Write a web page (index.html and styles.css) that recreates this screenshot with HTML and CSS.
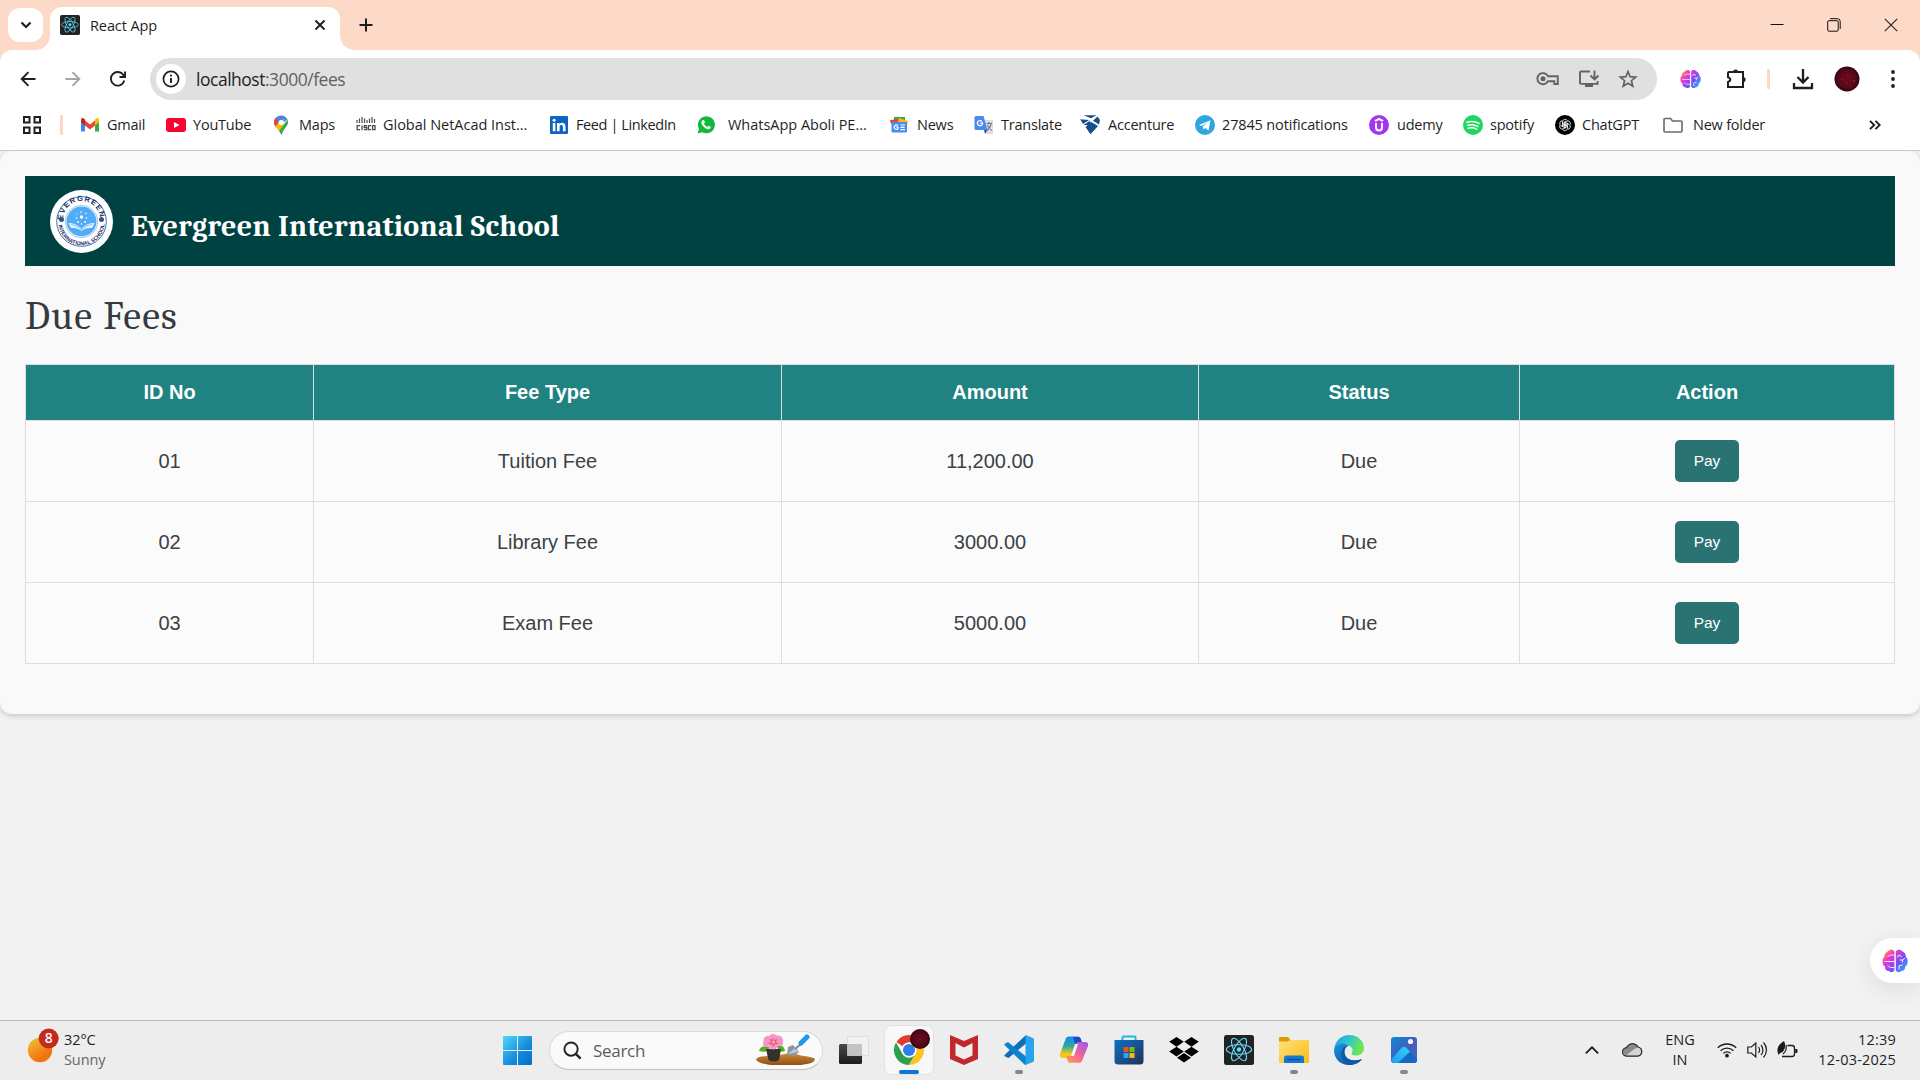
FILE: index.html
```html
<!DOCTYPE html>
<html lang="en">
<head>
<meta charset="utf-8">
<title>React App</title>
<link rel="stylesheet" href="styles.css">
</head>
<body>
<svg class="defs" width="0" height="0" aria-hidden="true">
  <defs>
    <linearGradient id="gBrain" x1="0" y1="0" x2="26" y2="24" gradientUnits="userSpaceOnUse"><stop offset="0.12" stop-color="#ff9a1f"/><stop offset="0.3" stop-color="#f136d2"/><stop offset="0.6" stop-color="#7a4df2"/><stop offset="0.92" stop-color="#22b5fb"/></linearGradient>
    <linearGradient id="gSun" x1="0.1" y1="0" x2="0.7" y2="1"><stop offset="0" stop-color="#edc536"/><stop offset="0.8" stop-color="#f17310"/></linearGradient>
    <linearGradient id="gWin" x1="0" y1="0" x2="1" y2="1"><stop offset="0" stop-color="#52d6fc"/><stop offset="0.6" stop-color="#1389db"/><stop offset="1" stop-color="#0070cb"/></linearGradient>
    <radialGradient id="gAvatar"><stop offset="0" stop-color="#6a0a1e"/><stop offset="0.7" stop-color="#560818"/><stop offset="1" stop-color="#30040f"/></radialGradient>
    <linearGradient id="gCopA" x1="0" y1="0" x2="0" y2="1"><stop offset="0" stop-color="#168bea"/><stop offset="0.45" stop-color="#2aa9a1"/><stop offset="0.8" stop-color="#f4c81d"/></linearGradient>
    <linearGradient id="gCopB" x1="1" y1="0" x2="0" y2="1"><stop offset="0" stop-color="#9b54ef"/><stop offset="0.5" stop-color="#f0649d"/><stop offset="1" stop-color="#ffa241"/></linearGradient>
    <linearGradient id="gStore" x1="0" y1="0" x2="1" y2="1"><stop offset="0" stop-color="#0b72c4"/><stop offset="1" stop-color="#25305a"/></linearGradient>
    <linearGradient id="gFold" x1="0" y1="0" x2="1" y2="1"><stop offset="0" stop-color="#ffe07a"/><stop offset="1" stop-color="#fdbb15"/></linearGradient>
    <linearGradient id="gEdgeA" x1="0" y1="0" x2="1" y2="0.3"><stop offset="0" stop-color="#1e9fe3"/><stop offset="0.5" stop-color="#2cc4d0"/><stop offset="1" stop-color="#6ee650"/></linearGradient>
    <linearGradient id="gEdgeB" x1="0" y1="0" x2="0.8" y2="1"><stop offset="0" stop-color="#1996e4"/><stop offset="1" stop-color="#0b4c9c"/></linearGradient>
    <linearGradient id="gPhoto" x1="0" y1="0" x2="1" y2="1"><stop offset="0" stop-color="#0f86dd"/><stop offset="0.6" stop-color="#4a5bb5"/><stop offset="1" stop-color="#2f72c8"/></linearGradient>
    <linearGradient id="gPeak" x1="1" y1="0" x2="0" y2="1"><stop offset="0" stop-color="#39d0fb"/><stop offset="1" stop-color="#1b9df0"/></linearGradient>
    <linearGradient id="gSoil" x1="0" y1="0" x2="0" y2="1"><stop offset="0" stop-color="#cf8a3b"/><stop offset="1" stop-color="#8f5215"/></linearGradient>
    <linearGradient id="gTv" x1="0" y1="0" x2="0" y2="1"><stop offset="0" stop-color="#4a4a48"/><stop offset="1" stop-color="#1b1b1b"/></linearGradient>
    <symbol id="react" viewBox="0 0 30 30"><rect width="30" height="30" rx="2.5" fill="#222"/><g fill="none" stroke="#61dafb" stroke-width="1.1"><ellipse cx="15" cy="14.5" rx="12.6" ry="4.8"/><ellipse cx="15" cy="14.5" rx="12.6" ry="4.8" transform="rotate(60 15 14.5)"/><ellipse cx="15" cy="14.5" rx="12.6" ry="4.8" transform="rotate(120 15 14.5)"/></g><circle cx="15" cy="14.5" r="2.2" fill="#61dafb"/></symbol>
    <symbol id="brain" viewBox="0 0 26 24"><path fill="url(#gBrain)" d="M12.4 2.5v19c-1 1.9-4 2.400-5.600.6C4.300 22 2.700 20 3 17.500 1.400 16.500.300 14.500.600 12.400.200 10.500 1 8.800 2.300 7.900 2.200 5.500 3.700 3.300 5.700 2.600 7.400.100 11 .100 12.400 2.500z"/><path fill="url(#gBrain)" d="M13.800 2.500v19c1 1.900 4 2.400 5.600.6 2.500-.1 4.100-2.100 3.800-4.600 1.600-1 2.700-3 2.400-5.100.4-1.900-.4-3.600-1.700-4.500.1-2.400-1.400-4.600-3.400-5.300-1.700-2.500-5.300-2.500-6.700-.1z"/><g fill="none" stroke="#fff" stroke-width=".9" stroke-linecap="round"><path d="M12 6H9.500C7.500 6 7 7 6 7.500M3 12.500h9M12 18.500H9.500c-2 0-2.500-1-3.500-1.500M15.500 8l1.500-2 2.500 1.500M18 11h2.500l2-1.500M20.500 11v2M17 20v-3l3-1"/></g></symbol>
  </defs>
</svg>

<header class="browser">
  <div class="tabstrip">
    <button class="tab-search"><svg width="12" height="8" viewBox="0 0 12 8"><path d="M1.500 1.500 6 6l4.500-4.500" fill="none" stroke="#1f1f1f" stroke-width="2.200"/></svg></button>
    <div class="tab">
      <svg width="20" height="20"><use href="#react"/></svg>
      <span class="tab-title">React App</span>
      <svg width="12" height="12" viewBox="0 0 12 12"><path d="m1.500 1.500 9 9m0-9-9 9" stroke="#1f1f1f" stroke-width="1.900"/></svg>
    </div>
    <svg class="new-tab" width="14" height="14" viewBox="0 0 14 14"><path d="M7 .5v13M.5 7h13" stroke="#1f1f1f" stroke-width="2"/></svg>
    <div class="window-controls">
      <svg width="14" height="14" viewBox="0 0 14 14"><path d="M.5 6.500h13" stroke="#111" stroke-width="1"/></svg>
      <svg width="14" height="14" viewBox="0 0 14 14" fill="none" stroke="#111"><rect x=".7" y="2.700" width="10.500" height="10.500" rx="1.200"/><path d="M3 .7h7.500q2.700 0 2.700 2.700V11"/></svg>
      <svg width="14" height="14" viewBox="0 0 14 14"><path d="m.8.8 12.400 12.400m0-12.400L.8 13.200" stroke="#222" stroke-width="1.100"/></svg>
    </div>
  </div>

  <div class="toolbar">
    <div class="nav">
      <svg width="16" height="16" viewBox="0 0 16 16" fill="none" stroke="#1f1f1f" stroke-width="1.900"><path d="M15.500 8H2M8.500 1.200 1.700 8l6.800 6.800"/></svg>
      <svg width="16" height="16" viewBox="0 0 16 16" fill="none" stroke="#a5a5a5" stroke-width="1.900"><path d="M.5 8H14M7.500 1.200 14.300 8l-6.800 6.800"/></svg>
      <svg width="16" height="16" viewBox="0 0 16 16" fill="none" stroke="#1f1f1f" stroke-width="1.900"><path d="M14.300 9.500A6.800 6.800 0 1 1 13.500 4.200l1.200 1.500M15 .5V6H9.500"/></svg>
    </div>
    <div class="omnibox">
      <span class="site-info"><svg width="18" height="18" viewBox="0 0 18 18"><circle cx="9" cy="9" r="7.600" fill="none" stroke="#1f1f1f" stroke-width="1.700"/><path d="M9 8v5M9 4.700v1.900" stroke="#1f1f1f" stroke-width="1.900"/></svg></span>
      <span class="url">localhost<span class="url-rest">:3000/fees</span></span>
      <div class="omni-actions">
        <svg width="24" height="20" viewBox="0 0 24 20" fill="none" stroke="#5f6368" stroke-width="1.900"><path d="M12 7.200a5.600 5.600 0 1 0 0 5h6.300V15h3.500V7.200z"/><circle cx="7" cy="9.700" r="2.500" fill="#5f6368" stroke="none"/></svg>
        <svg width="22" height="20" viewBox="0 0 22 20" fill="none" stroke="#5f6368" stroke-width="1.900"><path d="M12 2.500H3.200q-1.200 0-1.200 1.200v10q0 1.200 1.200 1.200h16.400V12M16.500 1.500V9M12.500 6.500l4 4 4-4"/><path d="M7 14.500h8V18H7z" fill="#5f6368" stroke="none"/></svg>
        <svg width="20" height="20" viewBox="0 0 20 20" fill="none" stroke="#5f6368" stroke-width="1.700"><path d="m10 2.500 2.100 5.200 5.600.4-4.300 3.600 1.400 5.500L10 14.200l-4.800 3 1.400-5.500-4.300-3.600 5.600-.4z"/></svg>
      </div>
    </div>
    <div class="tools">
      <svg class="t-brain" width="21" height="20"><use href="#brain"/></svg>
      <svg class="t-ext" width="22" height="22" viewBox="0 0 22 22"><path d="M4 4h14v15H3v-5c3-.8 3-4 0-4.800V5q0-1 1-1z" fill="none" stroke="#1f1f1f" stroke-width="2"/><path d="M8 4a2.600 2.600 0 0 1 5.200 0zM18 9a2.600 2.600 0 0 1 0 5.200z" fill="#1f1f1f"/></svg>
      <i class="peach-bar"></i>
      <svg class="t-down" width="22" height="22" viewBox="0 0 22 22" fill="none" stroke="#1f1f1f" stroke-width="2.300"><path d="M11 1v13M5.500 9l5.500 5.500L16.500 9M2 15v5h18v-5"/></svg>
      <svg class="t-ava" width="26" height="26"><circle cx="13" cy="13" r="12.500" fill="url(#gAvatar)"/><g fill="#e0283f"><circle cx="8" cy="13" r=".6"/><circle cx="14" cy="9" r=".6"/><circle cx="20" cy="15" r=".8"/><circle cx="13" cy="17" r=".6"/><circle cx="17" cy="20" r=".6"/></g></svg>
      <svg class="t-menu" width="4" height="18" viewBox="0 0 4 18" fill="#1f1f1f"><circle cx="2" cy="2" r="1.900"/><circle cx="2" cy="9" r="1.900"/><circle cx="2" cy="16" r="1.900"/></svg>
    </div>
  </div>

  <nav class="bookmarks">
    <svg class="apps" width="18" height="18" viewBox="0 0 18 18" fill="none" stroke="#1f1f1f" stroke-width="2"><path d="M1 1h5.500v5.500H1zM11.500 1H17v5.500h-5.500zM1 11.500h5.500V17H1zM11.500 11.500H17V17h-5.500z"/></svg>
    <i class="peach-bar"></i>
    <a class="bm"><svg width="20" height="20" viewBox="0 0 20 20"><path d="M1 5v11.500h4V9z" fill="#4285f4"/><path d="M19 5v11.500h-4V9z" fill="#34a853"/><path d="M5 5.500 10 9.500l5-4v5l-5 4-5-4z" fill="#ea4335"/><path d="M1 5q0-2.500 2.500-1.800L5 4.500v6L1 7.200z" fill="#c5221f"/><path d="M19 5q0-2.500-2.500-1.800L15 4.500v6l4-3.300z" fill="#fbbc04"/></svg><span>Gmail</span></a>
    <a class="bm"><svg width="20" height="20"><rect y="3" width="20" height="14" rx="3" fill="#ff0033"/><path d="m8 7 5.500 3L8 13z" fill="#fff"/></svg><span>YouTube</span></a>
    <a class="bm far"><svg width="20" height="20" viewBox="0 0 20 20"><path d="M3 7.500A7 7 0 0 1 10 .5c3 0 5.500 1.700 6.500 4L5 12.500C4 11 3 9.500 3 7.500z" fill="#4285f4"/><path d="M4.700 3 8 6l-3.500 5.500C3 9 2.300 6 4.700 3z" fill="#ea4335"/><path d="M4.300 11.300 13 3.500 12 11l-4 5.500c-1-2-2.700-3.700-3.700-5.200z" fill="#fbbc04"/><path d="M16.500 4.500c1.200 3 .2 5.500-1.500 7.500-2 2.500-3.500 4.500-4 7.500h-1c-.3-1-.9-2.200-2-3.500z" fill="#34a853"/><circle cx="10" cy="7.500" r="2.500" fill="#fff"/></svg><span>Maps</span></a>
    <a class="bm loose"><svg width="20" height="20" viewBox="0 0 20 20" fill="none" stroke="#4b4b4b" stroke-width="1.200"><path d="M1 5v3M3.500 3.500v4.500M6 2v6M8.500 3.500v4.500M11 5v3M13.500 3.500v4.500M16 2v6M18.500 4v4"/><path stroke-width="1.300" d="M4 10.700H1.200v4H4M6 10.500v4.700M11 10.700H8.300v1.800h2.500v2.200H8M15 10.700h-2.500v4H15M16.500 10.700H19v4h-2.500z"/></svg><span>Global NetAcad Inst...</span></a>
    <a class="bm tight"><svg width="20" height="20"><rect x="1" y="1" width="18" height="18" rx="1" fill="#0a66c2"/><path d="M3.800 8h2.600v8.300H3.800zM8 8h2.500v1.200c1.800-2.500 6-1.700 6 2.200v4.900h-2.600v-4.500c0-2.400-3.300-2.300-3.300 0v4.500H8z" fill="#fff"/><circle cx="5.100" cy="5.200" r="1.500" fill="#fff"/></svg><span>Feed | LinkedIn</span></a>
    <a class="bm wide loose"><svg width="20" height="20" viewBox="0 0 20 20"><path d="M1.500 18.500 3 14a8.500 8.500 0 1 1 3.200 3.200z" fill="#12b83d"/><path d="M6.500 5.500c1.500-1.200 1.800.5 2.500 1.800l-1 1.500c.7 1.500 1.700 2.500 3.300 3.100l1.400-1.200c1.500.8 2.700 1 1.800 2.300-2 2.700-5.500.3-7.300-1.800-1.600-1.900-2.800-4.200-.7-5.700z" fill="#fff"/></svg><span>WhatsApp Aboli PE...</span></a>
    <a class="bm far"><svg width="20" height="20" viewBox="0 0 20 20"><path d="M5 2h11v6H5z" fill="#34a853"/><path d="m1 5 10-1v5H2z" fill="#ea4335"/><path d="m10 3 9 3-1 5-9-3z" fill="#fbbc04"/><rect x="2.500" y="7" width="15.500" height="10.500" rx="1" fill="#4c8bf5"/><path d="M9 10.500a2.200 2.200 0 1 0 0 3.200v-1.500H7.300M11.500 10h4.500M11.500 12.300h4M11.500 14.600h4.500" fill="none" stroke="#fff" stroke-width="1.200"/></svg><span>News</span></a>
    <a class="bm"><svg width="20" height="20" viewBox="0 0 20 20"><path d="M8 5h11v14h-7z" fill="#dcdcdc"/><path d="M2 1h7.500l4 14H2q-1.500 0-1.500-1.500v-11Q.5 1 2 1z" fill="#4a87f2"/><path d="M10 15h3.500L11 19z" fill="#2550b0"/><path d="M8 6.500a2.600 2.600 0 1 0 .6 1.700H6.300" fill="none" stroke="#fff" stroke-width="1.300"/><path d="M12.500 8.500H18M15 7v1.500M17 9c-.5 3-2 5-4 6.300M13.500 10c.8 2.200 2.200 4 4.300 5.300" fill="none" stroke="#687887" stroke-width="1.100"/></svg><span>Translate</span></a>
    <a class="bm far"><svg width="20" height="20" viewBox="0 0 20 20" fill="#174e8c"><path d="M3.500.3h13l-5.500 3zM.2 4.300 9 5 3 9zM17.500 1.500 20 5l-1 4.500-6-3.700zM3.500 10 10 5.800l.8 4.200zM11.300 7l6.700 4-7.500 8.300-5-7.300z"/></svg><span>Accenture</span></a>
    <a class="bm"><svg width="20" height="20"><circle cx="10" cy="10" r="10" fill="#2fa5de"/><path d="m4 10 11.500-4.800-2 10.200-3.300-2.500-1.800 1.700-.6-3.200 5-4.200-6.200 3.900z" fill="#fff"/></svg><span class="wider">27845 notifications</span></a>
    <a class="bm far"><svg width="20" height="20"><circle cx="10" cy="10" r="10" fill="#a435f0"/><path d="m6 6.200 4-2.400 4 2.400M7 8v4.500c0 4 6 4 6 0V8" fill="none" stroke="#fff" stroke-width="2"/></svg><span>udemy</span></a>
    <a class="bm"><svg width="20" height="20"><circle cx="10" cy="10" r="10" fill="#1ed760"/><path d="M4 7.200c4-1.200 8.500-.8 12 1.200M4.600 10.300c3.500-1 7.200-.6 10.200 1.100M5.200 13.200c3-.8 5.800-.5 8.400.9" fill="none" stroke="#fff" stroke-width="1.600" stroke-linecap="round"/></svg><span>spotify</span></a>
    <a class="bm"><svg width="20" height="20"><circle cx="10" cy="10" r="10" fill="#000"/><g fill="none" stroke="#fff" stroke-width=".8"><path id="kn" d="M7.500 11.400V6.800a2.600 2.600 0 0 1 4.800-1.300M8.500 10.800l4.600-2.700"/><use href="#kn" transform="rotate(60 10 10)"/><use href="#kn" transform="rotate(120 10 10)"/><use href="#kn" transform="rotate(180 10 10)"/><use href="#kn" transform="rotate(240 10 10)"/><use href="#kn" transform="rotate(300 10 10)"/></g></svg><span>ChatGPT</span></a>
    <a class="bm folder"><svg width="20" height="20" viewBox="0 0 20 20"><path d="M2 3.500h5.500L9.500 6H18q1 0 1 1v9q0 1-1 1H2q-1 0-1-1V4.500q0-1 1-1z" fill="none" stroke="#6a6a6a" stroke-width="1.600"/></svg><span>New folder</span></a>
    <svg class="more" width="12" height="10" viewBox="0 0 12 10"><path d="m1 .8 4.200 4.200L1 9.200M6.500.8 10.700 5 6.500 9.200" fill="none" stroke="#1f1f1f" stroke-width="1.900"/></svg>
  </nav>
</header>

<main class="page">
  <section class="card">
    <div class="school-bar">
      <svg class="school-logo" width="63" height="63" viewBox="0 0 63 63">
        <defs><path id="arcTop" d="M13.200 33A18.600 18.600 0 1 1 49.800 33"/><path id="arcBot" d="M8.300 32A23.200 23.200 0 0 0 54.700 32"/></defs>
        <circle cx="31.500" cy="31.500" r="31.500" fill="#fff"/>
        <circle cx="31.500" cy="31.500" r="24.800" fill="none" stroke="#4070b0" stroke-width="1"/>
        <circle cx="31.500" cy="31.500" r="16.200" fill="#fff" stroke="#5f9fdc" stroke-width=".6"/>
        <circle cx="31.500" cy="31.500" r="15" fill="#50acf8"/>
        <g class="seal-text"><text font-size="7.500"><textPath href="#arcTop" startOffset="3" textLength="56">EVERGREEN</textPath></text><text font-size="5.200"><textPath href="#arcBot" startOffset="3" textLength="67" lengthAdjust="spacingAndGlyphs">INTERNATIONAL SCHOOL</textPath></text></g>
        <path d="M18.500 33c5 0 10 2 13 6 3-4 8-6 13-6l-2.500 5c-4 0-8 .5-10.500 3-2.500-2.500-6.500-3-10.500-3z" fill="#e5f4ff"/>
        <path d="M21 34.500c4 .5 8 2 10.500 5.500 2.500-3.500 6.500-5 10.500-5.500" fill="none" stroke="#50acf8" stroke-width=".7"/>
        <g fill="#fff"><circle cx="31.500" cy="27" r="1.700"/><circle cx="26.500" cy="28" r=".8"/><circle cx="36.500" cy="28" r=".8"/><circle cx="31" cy="22" r=".8"/><circle cx="27" cy="24" r=".6"/><circle cx="36" cy="23.500" r=".8"/><circle cx="28" cy="32" r=".9"/><circle cx="35" cy="32" r=".9"/><circle cx="31.500" cy="34" r=".7"/></g>
        <circle cx="11.500" cy="29.500" r="2.500" fill="#3a4f80"/><circle cx="51.500" cy="29.500" r="2.500" fill="#3a4f80"/>
      </svg>
      <h1 class="school-name">Evergreen International School</h1>
    </div>
    <h2 class="title">Due Fees</h2>
    <table class="fees">
      <colgroup><col class="c-id"><col class="c-type"><col class="c-amount"><col class="c-status"><col class="c-action"></colgroup>
      <thead><tr><th>ID No</th><th>Fee Type</th><th>Amount</th><th>Status</th><th>Action</th></tr></thead>
      <tbody>
        <tr><td>01</td><td>Tuition Fee</td><td>11,200.00</td><td>Due</td><td><button class="pay">Pay</button></td></tr>
        <tr><td>02</td><td>Library Fee</td><td>3000.00</td><td>Due</td><td><button class="pay">Pay</button></td></tr>
        <tr><td>03</td><td>Exam Fee</td><td>5000.00</td><td>Due</td><td><button class="pay">Pay</button></td></tr>
      </tbody>
    </table>
  </section>
  <div class="float-pill"><svg width="26" height="24"><use href="#brain"/></svg></div>
</main>

<footer class="taskbar">
  <div class="weather">
    <svg width="32" height="36" viewBox="0 0 32 36"><circle cx="13" cy="22" r="12.200" fill="url(#gSun)"/><circle cx="21.700" cy="10.500" r="10" fill="#c42b1c"/><text x="21.700" y="15.300" text-anchor="middle" class="badge-text">8</text></svg>
    <div class="weather-text"><span>32°C</span><span class="dim">Sunny</span></div>
  </div>
  <svg class="start" width="29" height="29" viewBox="0 0 29 29"><path d="M1 0h13v14H0V1q0-1 1-1zM15 0h13q1 0 1 1v13H15zM0 15h14v14H1q-1 0-1-1zM15 15h14v13q0 1-1 1H15z" fill="url(#gWin)"/></svg>
  <div class="search">
    <svg width="19" height="19" viewBox="0 0 20 20" fill="none" stroke="#222" stroke-width="2"><circle cx="8.500" cy="8.500" r="7"/><path d="m13.500 13.500 5 5" stroke-width="2.600"/></svg>
    <span>Search</span>
    <svg class="garden" width="60" height="32" viewBox="0 0 60 32">
      <path d="M0 25c3-3 10-3 18-3 10-2 16-4 22-2 8 3 16 2 19 5 0 4-8 5-14 6H15C9 30 1 29 0 25z" fill="url(#gSoil)"/>
      <path d="M3 17c1-4 5-6 10-4 1 3-3 6-10 4zM21 12c5-2 8 2 8 5-4 2-7 0-8-5z" fill="#58ad2b"/>
      <path d="M10 15h15l-2 11q-5 3-10.500 0z" fill="#33302f"/>
      <g fill="#f795c8"><circle cx="12" cy="6.500" r="4.500"/><circle cx="22" cy="6.500" r="5"/><circle cx="17" cy="4" r="4"/><circle cx="17" cy="11" r="4.500"/><circle cx="24" cy="9" r="3"/><circle cx="10" cy="10" r="3"/></g><path d="m17 3 1.300 3 3-1.500L20 8l3 2-4 .2-1.500 3-1.500-3-4-.2 3-2-1.500-3.500 3 1.500z" fill="#ea5c97"/><circle cx="17.500" cy="8" r="1.500" fill="#fbbd45"/>
      <path d="m31 21 1-8 5-2 6 7-5 4z" fill="#8996a5"/><path d="m32 20 7-6 3 4z" fill="#c1cad4"/><path d="m39 15 6-5" stroke="#7c8794" stroke-width="2"/><path d="m45 9 6-6" stroke="#2398e6" stroke-width="5" stroke-linecap="round"/>
    </svg>
  </div>
  <div class="apps-row">
    <span class="app"><svg width="30" height="30" viewBox="0 0 30 30"><rect x="0" y="9" width="23" height="20" rx="1.500" fill="url(#gTv)"/><rect x="8.500" y="1.500" width="21" height="19" rx="1" fill="#f1f1f1" stroke="#dcdcdc"/><path d="M8 9h15v12H8z" fill="#b8b8b8" fill-opacity=".8"/></svg></span>
    <span class="app active"><svg width="38" height="38" viewBox="0 0 38 38"><path d="M16 7a15 15 0 0 1 13 7.500H16a7.500 7.500 0 0 0-6.500 3.700L3.500 14A15 15 0 0 1 16 7z" fill="#e33b2e"/><path d="M3 14.500a15 15 0 0 0 13 22.500l6.500-11.300A7.500 7.500 0 0 1 9.500 25.700z" fill="#2da04c"/><path d="M29 14.500A15 15 0 0 1 16 37l6.500-11.300A7.500 7.500 0 0 0 16 14.500z" fill="#fcc41f"/><circle cx="16" cy="22" r="7.500" fill="#fff"/><circle cx="16" cy="22" r="6" fill="#2f7de9"/><circle cx="27" cy="11" r="10" fill="url(#gAvatar)"/></svg><i class="run current"></i></span>
    <span class="app"><svg width="28" height="30" viewBox="0 0 28 30"><path d="m0 0 14 6 14-6v24l-14 6-14-6z" fill="#c1272d"/><path d="m5.500 8 8.500 4.500L22.500 8v12.500L14 24.500l-8.500-4z" fill="#ededed"/></svg></span>
    <span class="app"><svg width="30" height="30" viewBox="0 0 30 30"><path d="M22 0v8.500L4.500 23 1 21.500Q-.2 20.500 1 19.500L21 1z" fill="#0d6fb8"/><path d="M1 10.500Q-.2 9.500 1 8.500L4 7l18 14.500V30l-1.500-.5z" fill="#0d83cd"/><path d="M21.500 0 29 3q1 .5 1 1.500v21q0 1-1 1.500l-7.500 3z" fill="#27a4ee"/></svg><i class="run"></i></span>
    <span class="app"><svg width="30" height="28" viewBox="0 0 30 28"><path d="M7 2q.8-1.500 2.500-1.500h10Q21 .5 22 3l1 4h-3.500q-2 0-2.600 2L13 20q-.7 2-3 2H4q-4 0-3-4z" fill="url(#gCopA)"/><path d="M14 1h5.500Q21 1 22 4l1 3h-4q-2 0-2.500 2z" fill="#1e49c8"/><path d="M23 25q-.8 1.700-2.500 1.700h-10Q9 26.700 8 23l-1-3h3.500q2 0 2.600-2L17 8q.7-2 3-2h6q4 0 3 4z" fill="url(#gCopB)"/><path d="M16 8h3l-4 12h-3z" fill="#f8f3f3"/></svg></span>
    <span class="app"><svg width="30" height="30" viewBox="0 0 30 30"><path d="M8.500 5V2.500Q8.500 1.500 9.500 1.500h11q1 0 1 1V5" fill="none" stroke="#20b5ec" stroke-width="2"/><path d="M.5 5h29v21q0 3.500-3.500 3.500H4Q.5 29.500.5 26z" fill="url(#gStore)"/><path d="M9.500 12h5v5h-5z" fill="#f25022"/><path d="M15.500 12h5v5h-5z" fill="#7fba00"/><path d="M9.500 18h5v5h-5z" fill="#21a8f3"/><path d="M15.500 18h5v5h-5z" fill="#ffb900"/></svg></span>
    <span class="app"><svg width="30" height="26" viewBox="0 0 30 26"><path d="m7.500 0 7.300 4.800-7.300 4.900L.2 4.800zM22.500 0l7.300 4.800-7.300 4.900-7.300-4.900zM7.500 9.700l7.300 4.900-7.300 4.800-7.300-4.800zM22.500 9.700l7.300 4.900-7.300 4.800-7.300-4.800zM15 16l7 4.700-7 4.900-7-4.900z"/></svg></span>
    <span class="app"><svg width="30" height="30"><use href="#react"/></svg></span>
    <span class="app"><svg width="30" height="28" viewBox="0 0 30 28"><path d="M0 2Q0 1 1 1h8l3 3.500V10H0z" fill="#dc9a0a"/><path d="M0 5.500h8L12 4h18v22q0 1-1 1H1q-1 0-1-1z" fill="url(#gFold)"/><path d="M5 27v-5q0-2.500 2.500-2.500h15Q25 19.500 25 22v5z" fill="#1577cf"/><path d="M8.500 23.500h13" stroke="#0a4f99" stroke-width="1.200"/></svg><i class="run"></i></span>
    <span class="app"><svg width="30" height="30" viewBox="0 0 30 30"><path d="M.2 13.500C1.500 5.500 7.500 0 15 0c9 0 15 6 15 13 0 5-4 7.500-8 7.500-3 0-5-1-4.500-2 2-2 1.500-6-2-7.500C10 8 3 9 .2 13.500z" fill="url(#gEdgeA)"/><path d="M0 15C1 9 9 7 14.500 10.500 11 12 9.500 16 11 20c2 5 8 7 17 4-3 4-8 6-13 6C6 30 0 23.500 0 15z" fill="url(#gEdgeB)"/><path d="M11 20c-1.500-5 .5-8 3.500-9.500C9 11 6.500 16 7.500 21c1 5 5 8 9 8.700 4 0 9-2 11.500-5.700-8 3-15 1-17-4z" fill="#0c59a4"/></svg></span>
    <span class="app"><svg width="26" height="26" viewBox="0 0 26 26"><rect width="26" height="26" rx="3" fill="url(#gPhoto)"/><path d="M.5 22 10.500 11q2.500-2.500 5 0L26 22v1q0 3-3 3H3q-2.500 0-2.500-3z" fill="#1668c4"/><path d="M.5 22 10.500 11q2.500-2.500 5 0l3.500 3.500L7 26H3q-2.500 0-2.500-3z" fill="url(#gPeak)"/><circle cx="19.500" cy="4.500" r="2.600" fill="#f0f0ff"/></svg><i class="run"></i></span>
  </div>
  <div class="tray">
    <svg width="14" height="8" viewBox="0 0 14 8"><path d="m.8 7.300 6.200-6 6.200 6" fill="none" stroke="#1b1b1b" stroke-width="1.700"/></svg>
    <svg class="cloud" width="21" height="15" viewBox="0 0 21 15"><path d="M5 14.200a4.300 4.300 0 0 1-.3-8.600A6.300 6.300 0 0 1 16 5a4.700 4.700 0 0 1 0 9.200z" fill="#d4d4d4"/><path d="M4 13.500C0 12 .5 6 4.700 5.600 7 0 14 0 16 5l-5 3z" fill="#8a8a8a"/><path d="M5 14.200a4.300 4.300 0 0 1-.3-8.600A6.300 6.300 0 0 1 16 5a4.700 4.700 0 0 1 0 9.200z" fill="none" stroke="#222" stroke-width="1.200"/></svg>
    <div class="lang"><span>ENG</span><span>IN</span></div>
    <svg class="wifi" width="20" height="16" viewBox="0 0 20 16" fill="none" stroke="#1b1b1b" stroke-width="1.300"><path d="M.8 5.800a13 13 0 0 1 18.400 0M3.600 8.700a9 9 0 0 1 12.800 0M6.300 11.400a5.300 5.300 0 0 1 7.400 0"/><circle cx="10" cy="13.700" r="1.200" fill="#1b1b1b"/></svg>
    <svg class="sound" width="21" height="18" viewBox="0 0 21 18" fill="none" stroke="#1b1b1b" stroke-width="1.200"><path d="M.8 6v6h3.500l4.500 4V2L4.300 6zM11.500 6a5 5 0 0 1 0 6M14 3.800a8 8 0 0 1 0 10.400M16.500 1.500a11 11 0 0 1 0 15"/></svg>
    <svg class="battery" width="21" height="18" viewBox="0 0 21 18"><path d="M10.500 4.500H15q2.500 0 2.500 2.500v6q0 2.500-2.500 2.500H5" fill="none" stroke="#1b1b1b" stroke-width="1.300"/><path d="M18.200 8h1.300q1 0 1 1v2q0 1-1 1h-1.300z" fill="#1b1b1b"/><path d="M7 0c2 3.500 1.500 8-1.500 11-1.500.5-3 1-4 3C-1 8 1 3.500 7 0z" fill="#1b1b1b"/><path d="M9 4c1 3.500-.3 6.500-3 9" fill="none" stroke="#1b1b1b" stroke-width="1.200"/></svg>
    <div class="clock"><span>12:39</span><span>12-03-2025</span></div>
  </div>
</footer>
</body>
</html>
```
FILE: styles.css
```css
* { box-sizing: border-box; }
body {
  margin: 0;
  width: 1920px;
  height: 1080px;
  overflow: hidden;
  display: flex;
  flex-direction: column;
  background: #f3f3f3;
  font-family: "Open Sans", "Noto Sans", sans-serif;
  font-size: 14.5px;
  color: #1f1f1f;
}
svg { display: block; flex: none; }
.defs { position: absolute; }
button { border: 0; padding: 0; font: inherit; }

/* Browser frame */
.browser { background: #fcdac7; height: 151px; flex: none; border-bottom: 1px solid #c8c8c8; }
.tabstrip { height: 50px; display: flex; align-items: center; padding-left: 8px; }
.tab-search { width: 35px; height: 34px; border-radius: 12px; background: #fff; display: grid; place-items: center; }
.tab {
  position: relative;
  width: 290px;
  height: 43px;
  margin: 7px 0 0 7px;
  padding: 0 14px 7px 10px;
  border-radius: 12px 12px 0 0;
  background: #fff;
  display: flex;
  align-items: center;
}
.tab::before, .tab::after { content: ""; position: absolute; bottom: 0; width: 14px; height: 14px; }
.tab::before { left: -14px; background: radial-gradient(circle at 0 0, transparent 13.5px, #fff 14px); }
.tab::after { right: -14px; background: radial-gradient(circle at 100% 0, transparent 13.5px, #fff 14px); }
.tab-title { flex: 1; margin-left: 10px; letter-spacing: -0.1px; }
.new-tab { margin-left: 19px; }
.window-controls { display: flex; gap: 43px; margin-left: auto; padding: 0 22px 1px 0; }

.toolbar { height: 58px; display: flex; align-items: center; background: #fff; border-radius: 12px 12px 0 0; }
.nav { display: flex; gap: 29px; width: 150px; padding-left: 20px; }
.omnibox { width: 1507px; height: 42px; border-radius: 21px; background: #e0e0e0; display: flex; align-items: center; padding: 0 19px 0 6px; }
.site-info { width: 30px; height: 30px; border-radius: 50%; background: #fff; display: grid; place-items: center; }
.url { margin-left: 10px; font-size: 17.5px; letter-spacing: -0.48px; }
.url-rest { color: #616161; }
.omni-actions { display: flex; align-items: center; gap: 18px; margin-left: auto; }
.tools { display: flex; align-items: center; }
.t-brain { margin-left: 23px; }
.t-ext { margin-left: 24px; }
.peach-bar { width: 3px; height: 20px; border-radius: 1px; background: #fcd8c4; }
.tools .peach-bar { margin-left: 20px; }
.t-down { margin-left: 22px; }
.t-ava { margin-left: 20px; }
.t-menu { margin-left: 31px; }

.bookmarks {
  height: 42px;
  padding-bottom: 9px;
  display: grid;
  grid-template-columns: 60px 20px 86px 105px 85px 193px 147px 193px 85px 106px 115px 174px 94px 92px 108px 206px 51px;
  align-items: center;
  background: #fff;
}
.apps { margin-left: 23px; }
.bm { display: flex; align-items: center; gap: 7px; white-space: nowrap; letter-spacing: -0.22px; }
.bm span { padding-bottom: 1px; }
.bm.far { gap: 8px; }
.bm.wide { gap: 12px; }
.bm.folder { gap: 10px; }
.bm.loose { letter-spacing: -0.02px; }
.bm.tight { letter-spacing: -0.4px; }
.wider { letter-spacing: -0.15px; }

/* Fees page */
.page { position: relative; flex: 1; background: #f3f3f3; overflow: hidden; }
.card { height: 563px; padding: 25px 25px 0; border-radius: 12px; background: #f9f9f9; box-shadow: 0 2px 6px rgba(0, 0, 0, .18); }
.school-bar { height: 90px; padding: 0 25px; display: flex; align-items: center; background: #004242; }
.school-name { margin: 12px 0 0 18px; font: bold 30px/36px Cambria, Caladea, "Noto Serif", "Liberation Serif", serif; color: #fff; letter-spacing: .33px; }
.seal-text { font-family: "Liberation Sans", sans-serif; font-weight: bold; fill: #1e2c60; }
.title { margin: 26px 0 0; height: 72px; font: 40px/48px Cambria, Caladea, "Noto Serif", "Liberation Serif", serif; color: #343a40; letter-spacing: 1.25px; }
.fees { width: 1870px; table-layout: fixed; border-collapse: collapse; font: 20px/24px "Liberation Sans", sans-serif; color: #3c4146; }
.c-id { width: 288px; }
.c-type { width: 468px; }
.c-amount { width: 417px; }
.c-status { width: 321px; }
.fees th, .fees td { padding: 0; text-align: center; border: 1px solid #ddd; }
.fees th { height: 56px; padding-bottom: 2px; background: #208281; color: #fff; }
.fees td { height: 81px; background: #fbfbfb; }
.pay { display: block; margin: 0 auto; width: 64px; height: 42px; border-radius: 5px; background: #2a7373; color: #fff; font-size: 15.5px; }
.float-pill {
  position: absolute;
  right: 0;
  top: 787px;
  width: 50px;
  height: 45px;
  padding-left: 12px;
  display: flex;
  align-items: center;
  border-radius: 23px 0 0 23px;
  background: #fff;
  box-shadow: 0 6px 30px rgba(0, 0, 0, .1);
}

/* Taskbar */
.taskbar { height: 60px; flex: none; display: flex; align-items: center; background: #ededed; border-top: 1px solid #bcbcbc; }
.weather { display: flex; gap: 5px; width: 503px; padding-left: 27px; font-size: 14.5px; }
.weather svg { margin-top: -4px; }
.weather-text { display: flex; flex-direction: column; line-height: 20px; margin-top: -2px; letter-spacing: -.1px; }
.dim { color: #666; }
.badge-text { font: 600 14px "Open Sans", sans-serif; fill: #fff; }
.search { width: 274px; height: 39px; margin: -1px 0 0 17px; padding: 0 6px 0 13px; border-radius: 20px; background: #fafafa; border: 1px solid #dadada; border-bottom-color: #bfbfbf; display: flex; align-items: center; }
.search span { margin-left: 11px; font-size: 17px; color: #5c5c5c; letter-spacing: -.3px; }
.garden { margin-left: auto; }
.apps-row { display: grid; grid-template-columns: repeat(11, 55px); margin: -2px 0 0 3px; }
.app { position: relative; height: 48px; display: grid; place-items: center; }
.active { width: 48px; margin: 0 auto; border-radius: 6px; background: #f8f8f8; box-shadow: 0 0 0 1px #e2e2e2; }
.active svg { margin: -5px 0 0 6px; }
.run { position: absolute; bottom: 0; width: 8px; height: 4px; border-radius: 2px; background: #858585; }
.current { width: 20px; background: #0a76d6; }
.tray { display: flex; align-items: center; margin: -2px 0 0 auto; padding-right: 24px; }
.cloud { margin-left: 23px; }
.lang { width: 50px; margin-left: 12px; display: flex; flex-direction: column; align-items: center; line-height: 20px; }
.wifi { margin-left: 12px; }
.sound { margin-left: 10px; }
.battery { margin-left: 9px; }
.clock { width: 98px; display: flex; flex-direction: column; align-items: flex-end; line-height: 20px; letter-spacing: .2px; }
```
